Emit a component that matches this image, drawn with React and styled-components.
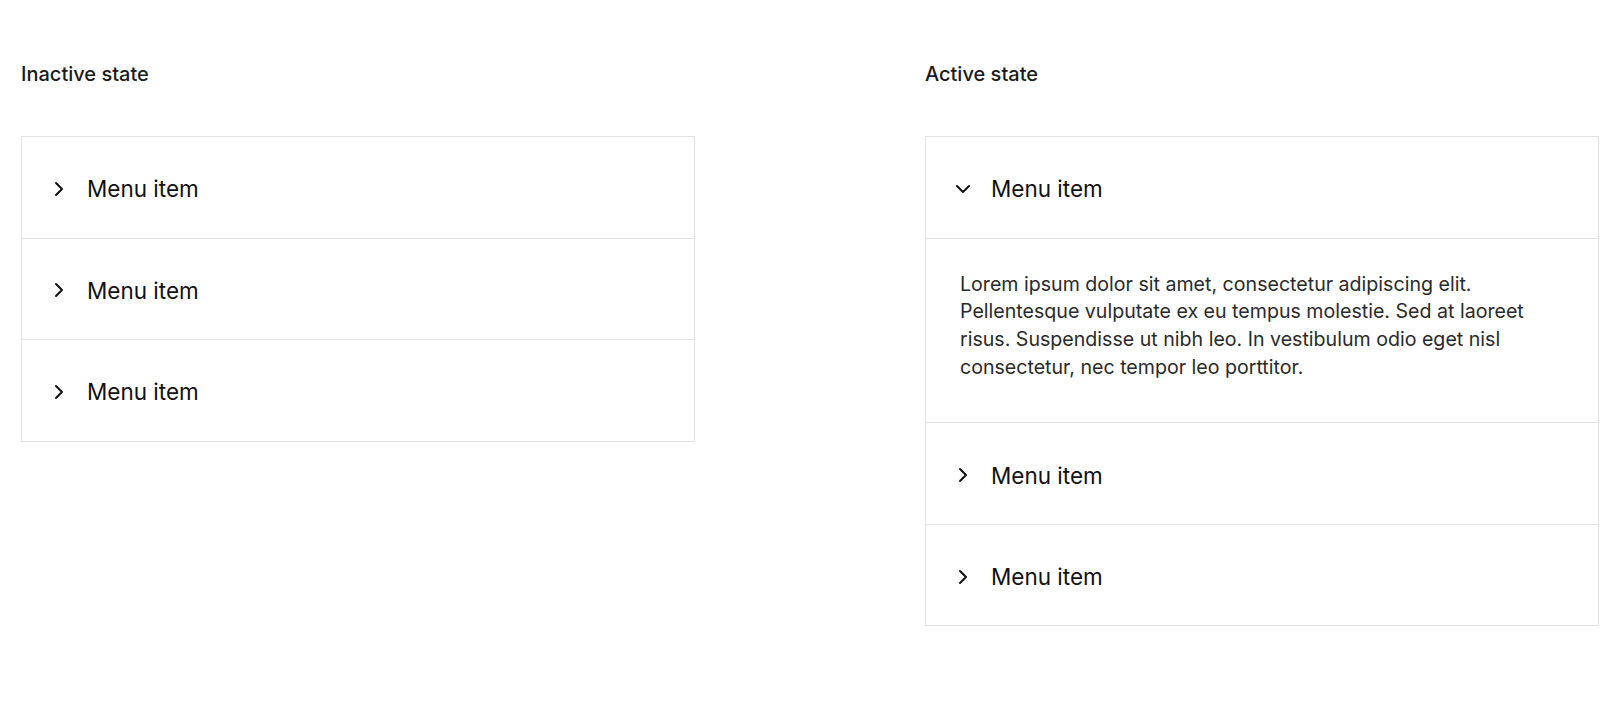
import React from "react";
import styled, { createGlobalStyle } from "styled-components";

const Global = createGlobalStyle`
  html, body { margin: 0; padding: 0; background: #fff; }
  body { font-family: Inter, "Noto Sans", sans-serif; color: #111; }
`;

const Page = styled.div`
  display: grid;
  grid-template-columns: 674px 674px;
  column-gap: 230px;
  padding: 62px 21px 0 21px;
  align-items: start;
`;

const Column = styled.section`
  display: flex;
  flex-direction: column;
`;

const Title = styled.h2`
  margin: 0 0 50px 0;
  font-size: 20px;
  line-height: 24px;
  font-weight: 500;
  color: #1a1a1a;
`;

const Accordion = styled.div`
  border: 1px solid #e2e2e2;
  display: flex;
  flex-direction: column;
`;

const Item = styled.div`
  & + & { border-top: 1px solid #e2e2e2; }
`;

const Header = styled.button`
  all: unset;
  box-sizing: border-box;
  width: 100%;
  height: 100.5px;
  display: flex;
  align-items: center;
  gap: 16px;
  padding: 3px 0 0 25px;
  font-family: Inter, "Noto Sans", sans-serif;
  font-size: 22.5px;
  font-weight: 400;
  color: #111;
  cursor: pointer;
`;

const Icon = styled.svg`
  width: 24px;
  height: 24px;
  flex: none;
`;

const Content = styled.div`
  border-top: 1px solid #e2e2e2;
  padding: 32px 48px 41px 34px;
  font-size: 19.6px;
  line-height: 27.7px;
  color: #2a2a2a;
`;

const Chevron = ({ open }) => (
  <Icon viewBox="0 0 24 24" fill="none" stroke="currentColor" strokeWidth="2" strokeLinecap="round" strokeLinejoin="round">
    {open ? <path d="m6 9 6 6 6-6" /> : <path d="m9 18 6-6-6-6" />}
  </Icon>
);

const MenuItem = ({ open, children }) => (
  <Item>
    <Header>
      <Chevron open={open} />
      Menu item
    </Header>
    {open && <Content>{children}</Content>}
  </Item>
);

export default function App() {
  return (
    <>
      <Global />
      <Page>
        <Column>
          <Title>Inactive state</Title>
          <Accordion>
            <MenuItem />
            <MenuItem />
            <MenuItem />
          </Accordion>
        </Column>
        <Column>
          <Title>Active state</Title>
          <Accordion>
            <MenuItem open>
              Lorem ipsum dolor sit amet, consectetur adipiscing elit. Pellentesque vulputate ex eu tempus molestie. Sed at laoreet risus. Suspendisse ut nibh leo. In vestibulum odio eget nisl consectetur, nec tempor leo porttitor.
            </MenuItem>
            <MenuItem />
            <MenuItem />
          </Accordion>
        </Column>
      </Page>
    </>
  );
}
